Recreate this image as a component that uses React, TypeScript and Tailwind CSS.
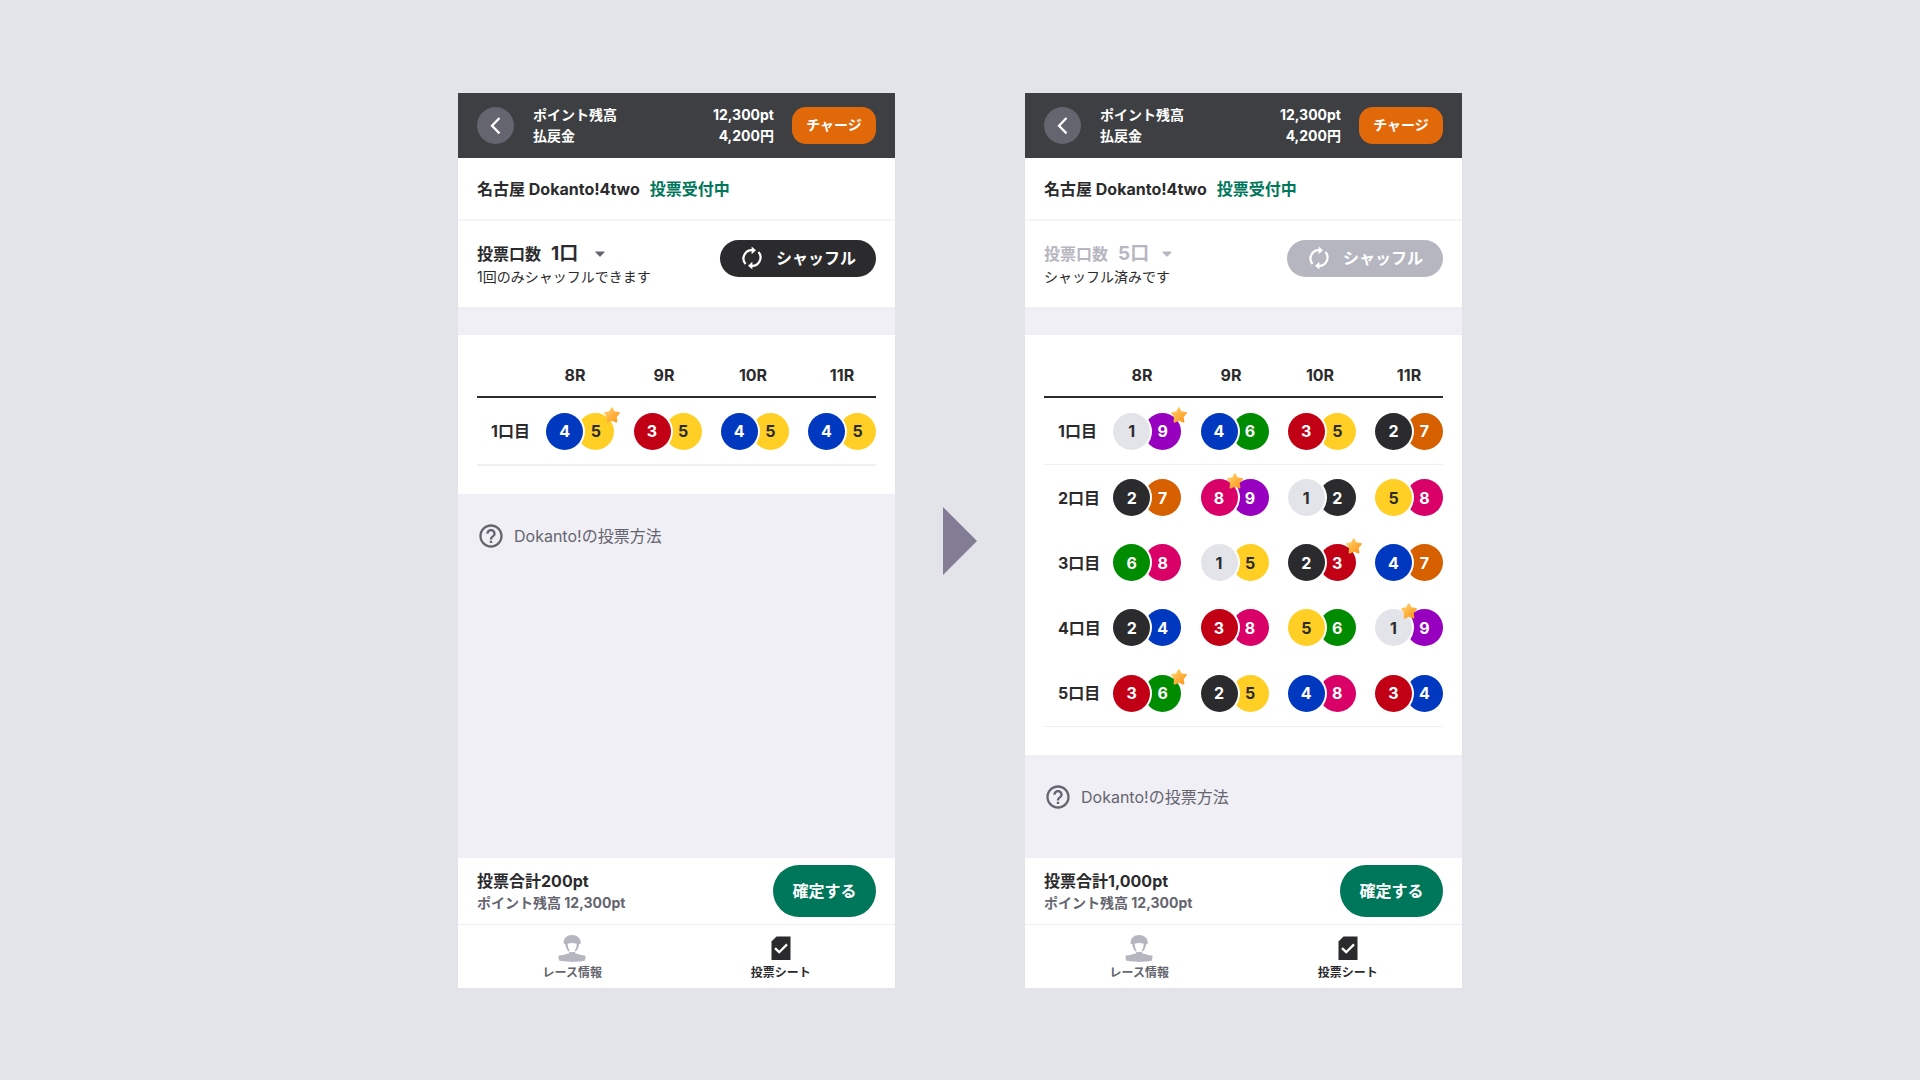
import { useId } from 'react';
import { clsx } from 'clsx';
import { MdHelpOutline } from 'react-icons/md';

type Star = 'middle' | 'end';
type Pick = [first: number, second: number, star?: Star];

type Sheet = {
  units: number;
  note: string;
  total: string;
  shuffled: boolean;
  rows: Pick[][];
};

const RACES = ['8R', '9R', '10R', '11R'];

const BALL_COLORS: Record<number, string> = {
  1: 'bg-[#e3e4ea] text-[#2b2b2d]',
  2: 'bg-[#2b2b2d] text-white',
  3: 'bg-[#c10015] text-white',
  4: 'bg-[#0038c0] text-white',
  5: 'bg-[#ffcf26] text-[#2b2b2d]',
  6: 'bg-[#008c00] text-white',
  7: 'bg-[#d65f00] text-white',
  8: 'bg-[#d90067] text-white',
  9: 'bg-[#9800c0] text-white',
};

const BEFORE: Sheet = {
  units: 1,
  note: '1回のみシャッフルできます',
  total: '200pt',
  shuffled: false,
  rows: [[[4, 5, 'end'], [3, 5], [4, 5], [4, 5]]],
};

const AFTER: Sheet = {
  units: 5,
  note: 'シャッフル済みです',
  total: '1,000pt',
  shuffled: true,
  rows: [
    [[1, 9, 'end'], [4, 6], [3, 5], [2, 7]],
    [[2, 7], [8, 9, 'middle'], [1, 2], [5, 8]],
    [[6, 8], [1, 5], [2, 3, 'end'], [4, 7]],
    [[2, 4], [3, 8], [5, 6], [1, 9, 'middle']],
    [[3, 6, 'end'], [2, 5], [4, 8], [3, 4]],
  ],
};

function StarIcon({ className }: { className?: string }) {
  const id = useId();
  return (
    <svg viewBox="0 0 18 18" className={clsx('h-[18px] w-[18px]', className)} aria-hidden="true">
      <defs>
        <linearGradient id={id} x1="0" y1="0" x2="1" y2="1">
          <stop offset="0.2" stopColor="#ffc75c" />
          <stop offset="0.9" stopColor="#ff9a1f" />
        </linearGradient>
      </defs>
      <path
        d="M8.8 2.4 10.9 6.3 15.8 7 12.6 10.6 13.4 15.6 9 13.6 4.6 15.6 5.1 10.8 2.2 7 6.8 6.3Z"
        fill={`url(#${id})`}
        stroke={`url(#${id})`}
        strokeWidth="2"
        strokeLinejoin="round"
      />
    </svg>
  );
}

function ShuffleIcon() {
  return (
    <svg viewBox="0 0 24 24" className="h-6 w-6" aria-hidden="true">
      <g fill="none" stroke="currentColor" strokeWidth="2.2">
        <path d="M5.6 18A8.4 8.4 0 0 1 12.5 4.1" />
        <path d="M18.4 6A8.4 8.4 0 0 1 11.5 19.9" />
      </g>
      <path d="M11.6 0.4 16 4.3 11.6 8.2Z" fill="currentColor" />
      <path d="M12.4 15.8 8 19.7 12.4 23.6Z" fill="currentColor" />
    </svg>
  );
}

function JockeyIcon() {
  return (
    <svg viewBox="0 0 28 28" className="h-7 w-7" fill="currentColor" aria-hidden="true">
      <path d="M14 1C8.9 1 5.6 4.2 5.6 8.8c0 .9.5 1.3 1.6 1.3.4 3.2 1.6 5.7 3.4 7.4L11.8 17C10.5 15 9.7 12.2 9.7 9.8 12.4 8.7 16 8.7 18.7 9.8 18.7 12.2 17.9 15 16.6 17l1.2.5c1.8-1.7 3-4.2 3.4-7.4 1.1 0 1.6-.4 1.6-1.3C22.8 4.2 19.1 1 14 1Z" />
      <path d="M11.4 18.1h5.6l.6 1.5c2.8.9 6.2 1.4 10 2.2L27 26.6C23 28.3 5.4 28.3 1.1 26.6L.3 21.8c4-.8 7.5-1.3 10.4-2.2Z" />
    </svg>
  );
}

function SheetIcon() {
  return (
    <svg viewBox="0 0 28 28" className="h-7 w-7" aria-hidden="true">
      <path d="M9.5 2.5H23.5V26H4.5V7.6Z" fill="currentColor" />
      <path d="m8 14.2 4.2 4L20 10.4" fill="none" stroke="#fff" strokeWidth="2.3" />
    </svg>
  );
}

function Ball({ number, className }: { number: number; className?: string }) {
  return (
    <span
      className={clsx(
        'flex h-[37px] w-[37px] shrink-0 items-center justify-center rounded-full',
        BALL_COLORS[number],
        className,
      )}
    >
      {number}
    </span>
  );
}

function Header() {
  return (
    <header className="flex h-[65px] items-center bg-[#3e3f43] px-[19px] text-sm font-bold text-white">
      <button
        type="button"
        aria-label="戻る"
        className="flex h-[37px] w-[37px] items-center justify-center rounded-full bg-[#65656f]"
      >
        <svg viewBox="0 0 24 24" className="h-6 w-6" aria-hidden="true">
          <path d="M15.5 4 8 11.7 15.5 19.4" fill="none" stroke="currentColor" strokeWidth="2.3" />
        </svg>
      </button>
      <dl className="ml-[19px] grid flex-1 grid-cols-[1fr_auto] pb-0.5 leading-[21px]">
        <dt>ポイント残高</dt>
        <dd className="text-right">12,300pt</dd>
        <dt>払戻金</dt>
        <dd className="text-right">4,200円</dd>
      </dl>
      <button type="button" className="ml-[18px] h-[37px] w-[84px] rounded-[14px] bg-[#e2690a] pb-0.5">
        チャージ
      </button>
    </header>
  );
}

function UnitPicker({ sheet }: { sheet: Sheet }) {
  const id = useId();
  return (
    <section className="flex h-[86px] items-start justify-between bg-white px-[19px] pt-[19px]">
      <div>
        <div
          className={clsx(
            'flex h-7 items-center font-bold',
            sheet.shuffled ? 'text-[#b6b6c0]' : 'text-[#2b2b2d]',
          )}
        >
          <label htmlFor={id}>投票口数</label>
          <div className="relative ml-2.5 flex items-center">
            <select
              id={id}
              defaultValue={sheet.units}
              disabled={sheet.shuffled}
              className="h-7 w-[58px] appearance-none bg-transparent text-[19px] leading-7 font-bold disabled:opacity-100"
            >
              {[1, 2, 3, 4, 5].map((n) => (
                <option key={n} value={n}>
                  {n}口
                </option>
              ))}
            </select>
            <svg
              viewBox="0 0 10 6"
              className={clsx(
                'pointer-events-none absolute right-1 h-1.5 w-2.5',
                sheet.shuffled ? 'text-[#b6b6c0]' : 'text-[#65656f]',
              )}
              aria-hidden="true"
            >
              <path
                d="M1 1H9L5 5Z"
                fill="currentColor"
                stroke="currentColor"
                strokeWidth="1.2"
                strokeLinejoin="round"
              />
            </svg>
          </div>
        </div>
        <p className="text-sm leading-[18px] text-[#2b2b2d]">{sheet.note}</p>
      </div>
      <button
        type="button"
        disabled={sheet.shuffled}
        className="flex h-[37px] w-[156px] items-center justify-center gap-3 rounded-full bg-[#2b2b2d] pb-0.5 font-bold text-white disabled:bg-[#b6b6c0]"
      >
        <ShuffleIcon />
        シャッフル
      </button>
    </section>
  );
}

function PickTable({ rows }: { rows: Pick[][] }) {
  return (
    <section className="bg-white px-[19px] pt-[18px] pb-7">
      <table className="block font-bold text-[#2b2b2d]">
        <thead className="block">
          <tr className="flex h-[45px] items-center justify-end gap-[21px] border-b-2 border-[#2b2b2d]">
            {RACES.map((race) => (
              <th key={race} scope="col" className="w-[68px] text-center">
                {race}
              </th>
            ))}
          </tr>
        </thead>
        <tbody className="block">
          {rows.map((picks, i) => (
            <tr
              key={i}
              className="flex h-[65px] items-center border-[#f0eff5] first:h-[67px] first:border-b last:h-[67px] last:border-b only:h-[68px] only:border-b-2"
            >
              <th scope="row" className="w-[50px] pl-3.5 text-left whitespace-nowrap">
                {i + 1}口目
              </th>
              {picks.map(([first, second, star], j) => (
                <td key={j} className="flex flex-1 justify-end">
                  <div className="relative flex">
                    <Ball number={first} className="z-10 ring-2 ring-white" />
                    <Ball number={second} className="-ml-1.5" />
                    {star && (
                      <StarIcon
                        className={clsx(
                          'absolute -top-[7px] z-20',
                          star === 'end' ? '-right-[7px]' : 'left-1/2 -translate-x-1/2',
                        )}
                      />
                    )}
                  </div>
                </td>
              ))}
            </tr>
          ))}
        </tbody>
      </table>
    </section>
  );
}

function Footer({ total }: { total: string }) {
  return (
    <footer className="mt-auto bg-white font-bold">
      <div className="flex h-[66px] items-center justify-between px-[19px]">
        <div>
          <p className="leading-6 text-[#2b2b2d]">投票合計{total}</p>
          <p className="text-sm leading-5 text-[#65656f]">ポイント残高 12,300pt</p>
        </div>
        <button type="button" className="h-[52px] w-[103px] rounded-full bg-[#00775a] text-white">
          確定する
        </button>
      </div>
      <nav className="grid h-16 grid-cols-2 border-t border-[#f0eff5] px-2.5 pt-0.5 text-xs leading-4">
        <a href="#race" className="flex flex-col items-center justify-center gap-[3px] text-[#65656f]">
          <span className="text-[#b6b6c0]">
            <JockeyIcon />
          </span>
          レース情報
        </a>
        <a
          href="#sheet"
          aria-current="page"
          className="flex flex-col items-center justify-center gap-[3px] text-[#2b2b2d]"
        >
          <SheetIcon />
          投票シート
        </a>
      </nav>
    </footer>
  );
}

function Phone({ sheet }: { sheet: Sheet }) {
  return (
    <article className="flex w-full max-w-[437px] flex-col bg-[#f0eff5]">
      <Header />
      <div className="flex h-[63px] items-center gap-2.5 border-b-2 border-[#f5f5f8] bg-white px-[19px] font-bold">
        <h1 className="text-[#2b2b2d]">名古屋 Dokanto!4two</h1>
        <p className="text-[#00775a]">投票受付中</p>
      </div>
      <UnitPicker sheet={sheet} />
      <div className="pt-7">
        <PickTable rows={sheet.rows} />
      </div>
      <a href="#help" className="mx-[19px] my-7 flex items-center gap-[9px] text-[#65656f]">
        <MdHelpOutline className="h-7 w-7" />
        Dokanto!の投票方法
      </a>
      <Footer total={sheet.total} />
    </article>
  );
}

export default function App() {
  return (
    <main className="flex min-h-screen justify-center gap-12 bg-[#e3e4ea] pt-[93px] pb-[92px] font-['Inter','Noto_Sans_CJK_JP',sans-serif] text-base">
      <Phone sheet={BEFORE} />
      <svg viewBox="0 0 34 68" className="h-[68px] w-[34px] shrink-0 self-center" aria-hidden="true">
        <path d="M0 0 34 34 0 68Z" fill="#827d94" />
      </svg>
      <Phone sheet={AFTER} />
    </main>
  );
}
